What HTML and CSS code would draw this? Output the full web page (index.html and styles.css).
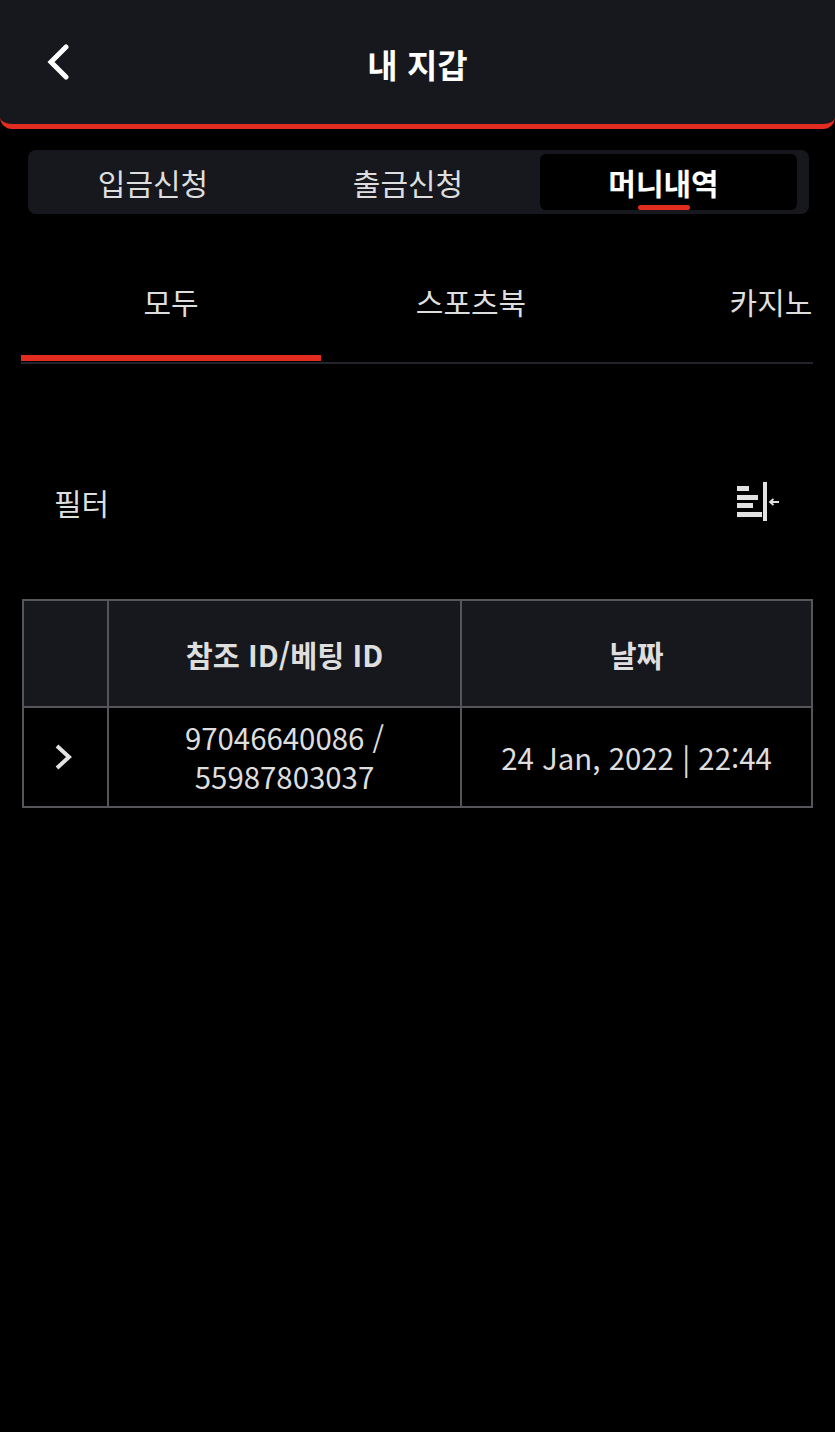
FILE: index.html
```html
<!doctype html>
<html lang="ko">
	<head>
		<meta charset="utf-8">
		<title>내 지갑</title>
		<meta name="viewport" content="width=device-width,initial-scale=1">
		<link rel="stylesheet" href="styles.css">
	</head>
	<body>
		<header class="topbar">
			<a class="back" href="#">
				<svg width="24" height="36" viewBox="0 0 24 36"><path d="M20 3 L5 18 L20 33" fill="none" stroke="#fff" stroke-width="5" stroke-linecap="round" stroke-linejoin="miter"/></svg>
			</a>
			<h1 class="title">내 지갑</h1>
		</header>

		<nav class="seg">
			<a class="seg-item" href="#">입금신청</a>
			<a class="seg-item" href="#">출금신청</a>
			<a class="seg-item active" href="#">머니내역</a>
		</nav>

		<nav class="tabs">
			<a class="tab active" href="#">모두</a>
			<a class="tab" href="#">스포츠북</a>
			<a class="tab" href="#">카지노</a>
		</nav>

		<div class="filter">
			<span>필터</span>
			<svg class="filter-icon" width="44" height="40" viewBox="0 0 44 40">
				<g fill="#e2e2e2">
					<rect x="1" y="5" width="12" height="5"/>
					<rect x="1" y="14" width="21" height="5"/>
					<rect x="1" y="22" width="16" height="5"/>
					<rect x="1" y="31" width="25" height="5"/>
					<rect x="27" y="1" width="4" height="39"/>
				</g>
				<path d="M43 21 H35 M37.5 18 L34 21 L37.5 24" fill="none" stroke="#e2e2e2" stroke-width="1.8"/>
			</svg>
		</div>

		<table class="history">
			<thead>
				<tr>
					<th class="col-arrow"></th>
					<th class="col-id">참조 ID/베팅 ID</th>
					<th>날짜</th>
				</tr>
			</thead>
			<tbody>
				<tr>
					<td>
						<svg class="chev" width="20" height="28" viewBox="0 0 20 28"><path d="M4 3 L16 14 L4 25" fill="none" stroke="#e2e2e2" stroke-width="4"/></svg>
					</td>
					<td>97046640086 /<br>55987803037</td>
					<td>24 Jan, 2022 | 22:44</td>
				</tr>
			</tbody>
		</table>
	</body>
</html>
```

FILE: styles.css
```css
* {
	margin: 0;
	padding: 0;
	box-sizing: border-box;
}
body {
	background-color: #000;
	color: #dedede;
	font-family: "Noto Sans CJK KR", "Noto Sans", sans-serif;
	font-size: 30px;
	overflow: hidden;
}
a {
	color: inherit;
	text-decoration: none;
}

.topbar {
	height: 129px;
	background-color: #16181d;
	border-bottom: 5px solid #e32c20;
	border-radius: 0 0 12px 12px;
	display: flex;
	align-items: center;
	justify-content: center;
	padding-top: 4px;
	position: relative;
}
.back {
	position: absolute;
	left: 46px;
	top: 44px;
	display: block;
	line-height: 0;
}
.title {
	color: #fff;
	font-size: 33px;
	font-weight: 700;
}

.seg {
	margin: 21px 26px 0 28px;
	height: 64px;
	padding: 4px 12px 4px 0;
	background-color: #16181d;
	border-radius: 8px;
	display: grid;
	grid-template-columns: 250px 250px 257px;
	column-gap: 6px;
}
.seg-item {
	display: flex;
	align-items: center;
	justify-content: center;
}
.seg-item:nth-child(2) {
	padding-right: 2px;
}
.seg-item.active {
	background-color: #000;
	border-radius: 6px;
	color: #fff;
	font-weight: 700;
	padding-right: 10px;
	position: relative;
}
.seg-item.active::after {
	content: "";
	position: absolute;
	left: 98px;
	bottom: 0;
	width: 52px;
	height: 5px;
	border-radius: 3px;
	background-color: #e32c20;
}

.tabs {
	margin: 41px 22px 0 21px;
	height: 109px;
	display: flex;
	overflow: hidden;
	border-bottom: 2px solid #23242c;
}
.tab {
	flex: 0 0 300px;
	height: 106px;
	padding-top: 21px;
	text-align: center;
	line-height: 50px;
}
.tab.active {
	border-bottom: 6px solid #e32c20;
}

.filter {
	margin: 113px 55px 0 54px;
	height: 50px;
	display: flex;
	align-items: center;
	justify-content: space-between;
}
.filter-icon {
	margin-bottom: 2px;
}

.history {
	margin: 72px 0 0 22px;
	width: 791px;
	font-size: 29.4px;
	border-collapse: collapse;
	table-layout: fixed;
}
.history th,
.history td {
	border: 2px solid #56565a;
	text-align: center;
	vertical-align: middle;
}
.history th {
	height: 107px;
	background-color: #16181d;
	font-weight: 700;
}
.history td {
	height: 100px;
	line-height: 39px;
}
.col-arrow {
	width: 85px;
}
.col-id {
	width: 353px;
}
.chev {
	display: block;
	margin: 0 auto 0 29px;
}
```
